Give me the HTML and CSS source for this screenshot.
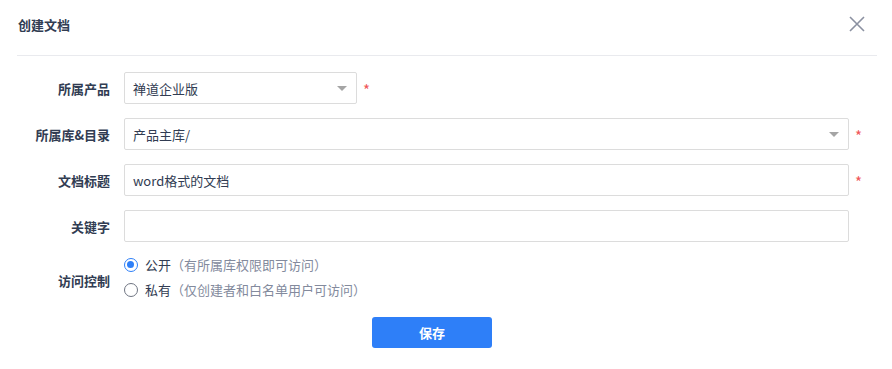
FILE: index.html
```html
<!DOCTYPE html>
<html lang="zh-CN">
<head>
    <meta charset="UTF-8">
    <meta name="viewport" content="width=device-width, initial-scale=1.0">
    <title>创建文档</title>
    <link rel="stylesheet" href="styles.css">
</head>
<body>

    <div class="dialogo">
        <div class="cabecera">
            <div class="titulo">创建文档</div>
            <button class="cerrar" aria-label="关闭">
                <svg width="16" height="16" viewBox="0 0 16 16">
                    <path d="M1 1 L15 15 M15 1 L1 15" stroke="#8b91a1" stroke-width="1.6" fill="none"/>
                </svg>
            </button>
        </div>

        <form class="formulario">
            <div class="fila">
                <label class="etiqueta">所属产品</label>
                <div class="campo">
                    <div class="selector corto">
                        <span>禅道企业版</span>
                        <i class="flecha"></i>
                    </div>
                    <span class="requerido">*</span>
                </div>
            </div>

            <div class="fila">
                <label class="etiqueta">所属库&amp;目录</label>
                <div class="campo">
                    <div class="selector">
                        <span>产品主库/</span>
                        <i class="flecha"></i>
                    </div>
                    <span class="requerido ancho">*</span>
                </div>
            </div>

            <div class="fila">
                <label class="etiqueta">文档标题</label>
                <div class="campo">
                    <div class="entrada">word格式的文档</div>
                    <span class="requerido ancho">*</span>
                </div>
            </div>

            <div class="fila">
                <label class="etiqueta">关键字</label>
                <div class="campo">
                    <div class="entrada"></div>
                    <span class="requerido ancho"></span>
                </div>
            </div>

            <div class="fila acceso">
                <label class="etiqueta">访问控制</label>
                <div class="opciones">
                    <div class="opcion">
                        <span class="radio marcado"></span>
                        <span>公开</span><span class="nota">（有所属库权限即可访问）</span>
                    </div>
                    <div class="opcion">
                        <span class="radio"></span>
                        <span>私有</span><span class="nota">（仅创建者和白名单用户可访问）</span>
                    </div>
                </div>
            </div>

            <div class="acciones">
                <button type="button" class="guardar">保存</button>
            </div>
        </form>
    </div>

</body>
</html>
```

FILE: styles.css
```css
body {
    margin: 0;
    background: #fff;
    font-family: "Noto Sans CJK SC", "Noto Sans", sans-serif;
    font-size: 13px;
    color: #313c52;
}

.dialogo {
    width: 892px;
    height: 369px;
    padding: 0 15px 0 17px;
    box-sizing: border-box;
}

.cabecera {
    display: flex;
    justify-content: space-between;
    align-items: center;
    height: 56px;
    padding-bottom: 7px;
    box-sizing: border-box;
    border-bottom: 1px solid #e9eaee;
}

.titulo {
    font-size: 13px;
    font-weight: 600;
    padding-left: 1px;
}

.cerrar {
    border: none;
    background: none;
    padding: 0;
    margin-right: 12px;
    width: 16px;
    height: 16px;
    cursor: pointer;
}

.cerrar svg {
    display: block;
}

.formulario {
    padding-top: 16px;
}

.fila {
    display: flex;
    align-items: center;
    margin-bottom: 14px;
}

.etiqueta {
    width: 93px;
    flex-shrink: 0;
    text-align: right;
    font-weight: 600;
    margin-right: 14px;
}

.campo {
    flex: 1;
    display: flex;
    align-items: center;
}

.selector,
.entrada {
    flex: 1;
    height: 32px;
    box-sizing: border-box;
    border: 1px solid #dcdcdc;
    border-radius: 2px;
    padding: 0 8px;
    display: flex;
    align-items: center;
    justify-content: space-between;
}

.selector.corto {
    flex: none;
    width: 233px;
}

.flecha {
    width: 0;
    height: 0;
    border-left: 5px solid transparent;
    border-right: 5px solid transparent;
    border-top: 5px solid #a5a5a5;
    margin-right: 1px;
}

.requerido {
    color: #f0565a;
    font-size: 15px;
    line-height: 1;
    margin-left: 6px;
    padding-top: 3px;
}

.requerido.ancho {
    width: 22px;
}

.acceso {
    margin-top: -4px;
    margin-bottom: 0;
}

.acceso .etiqueta {
    padding-top: 6px;
}

.opcion {
    display: flex;
    align-items: center;
    height: 25px;
}

.radio {
    width: 14px;
    height: 14px;
    box-sizing: border-box;
    border: 1.5px solid #6f7582;
    border-radius: 50%;
    margin-right: 7px;
    position: relative;
}

.radio.marcado {
    border-color: #2e7ff8;
}

.radio.marcado::after {
    content: "";
    position: absolute;
    left: 2px;
    top: 2px;
    width: 7px;
    height: 7px;
    border-radius: 50%;
    background: #2e7ff8;
}

.nota {
    color: #838a9d;
}

.acciones {
    padding: 15px 0 0 355px;
}

.guardar {
    width: 120px;
    height: 31px;
    border: none;
    border-radius: 3px;
    background: #2e7ff8;
    color: #fff;
    font-family: inherit;
    font-size: 13px;
    font-weight: 600;
    cursor: pointer;
}
```
